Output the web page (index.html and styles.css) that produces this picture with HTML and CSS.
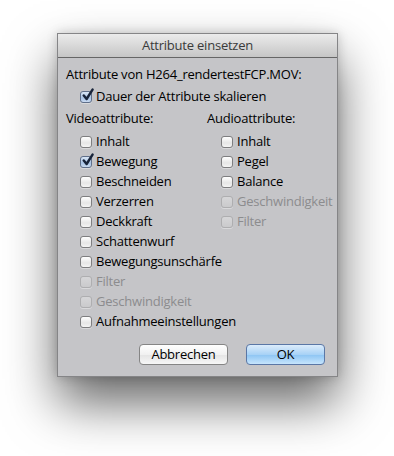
FILE: index.html
```html
<!DOCTYPE html>
<html lang="de">
<head>
<meta charset="utf-8">
<title>Attribute einsetzen</title>
<link rel="stylesheet" href="styles.css">
</head>
<body>
<div class="window">
  <div class="titlebar">Attribute einsetzen</div>
  <div class="content">
    <div class="row">Attribute von H264_rendertestFCP.MOV:</div>
    <label class="row indent check"><span class="box checked"><svg viewBox="0 0 16 16" class="tick"><path d="M3.2 8.6 L6.4 12.6 L13.2 1.8" fill="none" stroke="#18243a" stroke-width="2.8" stroke-linecap="round" stroke-linejoin="round"/></svg></span>Dauer der Attribute skalieren</label>
    <div class="columns">
      <div class="col">
        <div class="row head">Videoattribute:</div>
        <div class="list">
          <label class="row indent check"><span class="box"></span>Inhalt</label>
          <label class="row indent check"><span class="box checked"><svg viewBox="0 0 16 16" class="tick"><path d="M3.2 8.6 L6.4 12.6 L13.2 1.8" fill="none" stroke="#18243a" stroke-width="2.8" stroke-linecap="round" stroke-linejoin="round"/></svg></span>Bewegung</label>
          <label class="row indent check"><span class="box"></span>Beschneiden</label>
          <label class="row indent check"><span class="box"></span>Verzerren</label>
          <label class="row indent check"><span class="box"></span>Deckkraft</label>
          <label class="row indent check"><span class="box"></span>Schattenwurf</label>
          <label class="row indent check"><span class="box"></span>Bewegungsunschärfe</label>
          <label class="row indent check disabled"><span class="box"></span>Filter</label>
          <label class="row indent check disabled"><span class="box"></span>Geschwindigkeit</label>
          <label class="row indent check"><span class="box"></span>Aufnahmeeinstellungen</label>
        </div>
      </div>
      <div class="col">
        <div class="row head">Audioattribute:</div>
        <div class="list">
          <label class="row indent check"><span class="box"></span>Inhalt</label>
          <label class="row indent check"><span class="box"></span>Pegel</label>
          <label class="row indent check"><span class="box"></span>Balance</label>
          <label class="row indent check disabled"><span class="box"></span>Geschwindigkeit</label>
          <label class="row indent check disabled"><span class="box"></span>Filter</label>
        </div>
      </div>
    </div>
    <div class="buttons">
      <button class="btn">Abbrechen</button>
      <button class="btn primary">OK</button>
    </div>
  </div>
</div>
</body>
</html>
```
FILE: styles.css
```css
html, body {
  margin: 0;
  padding: 0;
  background: #ffffff;
}
html {
  min-height: 456px;
}
body {
  min-height: 456px;
  box-sizing: border-box;
  font-family: "Open Sans", "DejaVu Sans", sans-serif;
  font-size: 13px;
  letter-spacing: -0.22px;
  color: #000;
  padding: 33px 0 0 57px;
}
.window {
  width: 279px;
  border: 1px solid #858587;
  background: #c5c5c8;
  box-shadow: 0 26px 48px rgba(0, 0, 0, 0.6), 0 0 10px rgba(0, 0, 0, 0.18);
}
.titlebar {
  height: 23px;
  line-height: 22px;
  text-align: center;
  color: #3a3a3a;
  background: linear-gradient(#ebebeb, #c6c6c6);
  border-bottom: 1px solid #666666;
}
.content {
  padding: 6px 12px 11px 8px;
}
.row {
  display: flex;
  align-items: center;
  height: 20px;
  line-height: 20px;
  white-space: nowrap;
}
.content > .row + .row {
  margin-top: 2px;
}
.columns {
  display: grid;
  grid-template-columns: 141px 1fr;
  margin-top: 2px;
}
.list {
  margin-top: 3px;
}
.indent {
  padding-left: 14px;
}
.box {
  position: relative;
  flex: none;
  width: 10px;
  height: 10px;
  margin: 2px 4px 0 0;
  border: 1px solid #7e7e80;
  border-radius: 3px;
  background: linear-gradient(#ffffff, #e6e6e6 60%, #f4f4f4);
  box-shadow: 0 1px 0 rgba(255, 255, 255, 0.35);
}
.box.checked {
  background: linear-gradient(#d9e6f5, #a9c4e6 60%, #c9daf0);
  border-color: #5f6f8a;
}
.tick {
  position: absolute;
  left: 0px;
  top: -4px;
  width: 14px;
  height: 14px;
}
.disabled {
  color: #8c8c8e;
}
.disabled .box {
  border-color: #aeaeb0;
  background: linear-gradient(#d6d6d8, #cacacc);
}
.buttons {
  display: flex;
  justify-content: flex-end;
  gap: 18px;
  margin-top: 13px;
}
.btn {
  font-family: inherit;
  font-size: 13px;
  letter-spacing: -0.22px;
  height: 21px;
  padding: 0;
  line-height: 19px;
  border: 1px solid #858585;
  border-radius: 4px;
  color: #000;
  background: linear-gradient(#ffffff, #f1f1f1 50%, #e4e4e4 51%, #f7f7f7);
  width: 89px;
}
.btn.primary {
  width: 79px;
  border-color: #5a77a6;
  background: linear-gradient(#dcecfb, #a8d2f6 50%, #8cc4f3 51%, #c6e5fd);
}
```
